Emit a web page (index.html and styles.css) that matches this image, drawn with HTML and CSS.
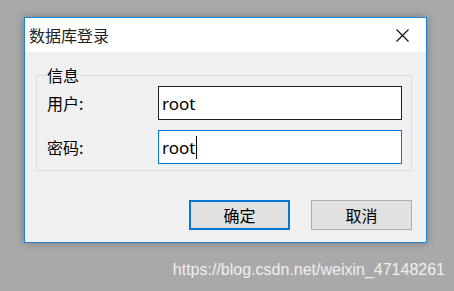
FILE: index.html
```html
<!DOCTYPE html>
<html lang="zh-CN">
<head>
<meta charset="UTF-8">
<title>数据库登录</title>
<link rel="stylesheet" href="styles.css">
</head>
<body>

<div class="dialog">
  <div class="titlebar">
    <span class="title">数据库登录</span>
    <span class="close">
      <svg width="13" height="13" viewBox="0 0 13 13"><path d="M0.5 0.5 L12.5 12.5 M12.5 0.5 L0.5 12.5" stroke="#111" stroke-width="1.2" fill="none"/></svg>
    </span>
  </div>
  <div class="content">
    <fieldset class="group">
      <legend>信息</legend>
      <div class="row">
        <label class="label">用户:</label>
        <div class="field">root</div>
      </div>
      <div class="row">
        <label class="label">密码:</label>
        <div class="field focused">root<span class="caret"></span></div>
      </div>
    </fieldset>
    <div class="buttons">
      <button class="btn default">确定</button>
      <button class="btn">取消</button>
    </div>
  </div>
</div>

<div class="watermark">https://blog.csdn.net/weixin_47148261</div>

</body>
</html>
```

FILE: styles.css
```css
body, html {
  margin: 0;
  height: 100%;
}

body {
  background: #a9a9a9;
  padding: 17px 0 0 24px;
  box-sizing: border-box;
  font-family: "Noto Sans", "Noto Sans CJK SC", sans-serif;
}

.dialog {
  width: 403px;
  height: 226px;
  box-sizing: border-box;
  border: 1px solid #1c84d6;
  background: #f0f0f0;
  box-shadow: 0 0 8px rgba(0, 0, 0, 0.3);
}

.titlebar {
  height: 34px;
  background: #fff;
  display: flex;
  align-items: center;
  justify-content: space-between;
  padding: 0 17px 0 4px;
}

.title {
  font-family: "Noto Sans CJK SC", sans-serif;
  font-size: 16px;
  color: #222;
}

.close svg {
  display: block;
}

.content {
  padding: 14px 14px 0 11px;
}

.group {
  margin: 0;
  border: 1px solid #dcdcdc;
  padding: 2px 9px 6px 10px;
}

.group legend {
  font-family: "Noto Sans CJK SC", sans-serif;
  font-size: 16px;
  line-height: 18px;
  padding: 0 1px;
  margin-left: -1px;
  color: #000;
}

.row {
  display: flex;
  align-items: center;
}

.row + .row {
  margin-top: 10px;
}

.label {
  width: 111px;
  font-family: "Noto Sans CJK SC", sans-serif;
  font-size: 16px;
  color: #000;
}

.field {
  width: 244px;
  height: 34px;
  box-sizing: border-box;
  border: 1px solid #1e1e1e;
  background: #fff;
  padding-left: 3px;
  font-family: "Noto Sans", sans-serif;
  font-size: 17px;
  line-height: 31px;
  color: #000;
  display: flex;
  align-items: center;
}

.field.focused {
  border-color: #0078d7;
}

.caret {
  display: inline-block;
  width: 1px;
  height: 23px;
  background: #000;
  margin-left: 1px;
}

.buttons {
  display: flex;
  justify-content: flex-end;
  gap: 21px;
  margin-top: 29px;
}

.btn {
  width: 101px;
  height: 30px;
  box-sizing: border-box;
  background: #e1e1e1;
  border: 1px solid #adadad;
  border-radius: 0;
  font-family: "Noto Sans CJK SC", sans-serif;
  font-size: 16px;
  color: #000;
  padding: 0;
}

.btn.default {
  border: 2px solid #0078d7;
}

.watermark {
  text-align: right;
  padding-right: 9px;
  margin-top: 18px;
  font-family: "Liberation Sans", Arial, sans-serif;
  font-size: 16px;
  color: #efefef;
}
```
